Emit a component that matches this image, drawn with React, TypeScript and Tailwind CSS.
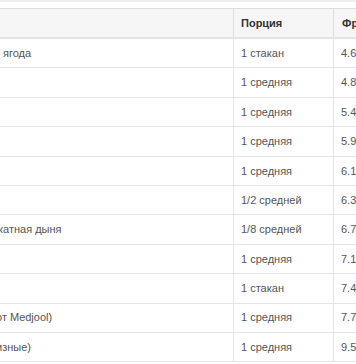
import React from "react";

const rows: { name: string; shift: string; portion: string; fr: string }[] = [
  { name: "ягода", shift: "pl-[3px]", portion: "1 стакан", fr: "4.6" },
  { name: "", shift: "", portion: "1 средняя", fr: "4.8" },
  { name: "", shift: "", portion: "1 средняя", fr: "5.4" },
  { name: "", shift: "", portion: "1 средняя", fr: "5.9" },
  { name: "", shift: "", portion: "1 средняя", fr: "6.1" },
  { name: "", shift: "", portion: "1/2 средней", fr: "6.3" },
  { name: "катная дыня", shift: "-ml-[2px]", portion: "1/8 средней", fr: "6.7" },
  { name: "", shift: "", portion: "1 средняя", fr: "7.1" },
  { name: "", shift: "", portion: "1 стакан", fr: "7.4" },
  { name: "от Medjool)", shift: "-ml-[4px]", portion: "1 средняя", fr: "7.7" },
  { name: "изные)", shift: "-ml-[4px]", portion: "1 средняя", fr: "9.5" },
];

export default function App() {
  return (
    <div className="w-[356px] h-[364px] overflow-hidden bg-white font-['Liberation_Sans',Arial,sans-serif] text-[11px] text-[#555]">
      <div className="h-[2px] bg-[#eeeeee]" />
      <div className="h-[6px]" />
      <div className="border-t border-[#dddddd]">
        <div className="flex h-[30px] bg-[#f6f6f6] border-b-2 border-[#e4e4e4] font-bold text-[#333]">
          <div className="w-[234px] shrink-0 border-r border-[#dddddd]" />
          <div className="w-[100px] shrink-0 border-r border-[#dddddd] pl-[7px] flex items-center">Порция</div>
          <div className="flex-1 pl-[8px] flex items-center whitespace-nowrap">Фруктоза</div>
        </div>
        {rows.map((r, i) => (
          <div key={i} className="flex h-[29.4px] border-b border-[#e4e4e4]">
            <div className="w-[234px] shrink-0 border-r border-[#e4e4e4] overflow-hidden flex items-center whitespace-nowrap">
              <span className={r.shift}>{r.name}</span>
            </div>
            <div className="w-[100px] shrink-0 border-r border-[#e4e4e4] pl-[7px] flex items-center whitespace-nowrap">
              {r.portion}
            </div>
            <div className="flex-1 pl-[7px] flex items-center whitespace-nowrap">{r.fr} г</div>
          </div>
        ))}
      </div>
    </div>
  );
}
